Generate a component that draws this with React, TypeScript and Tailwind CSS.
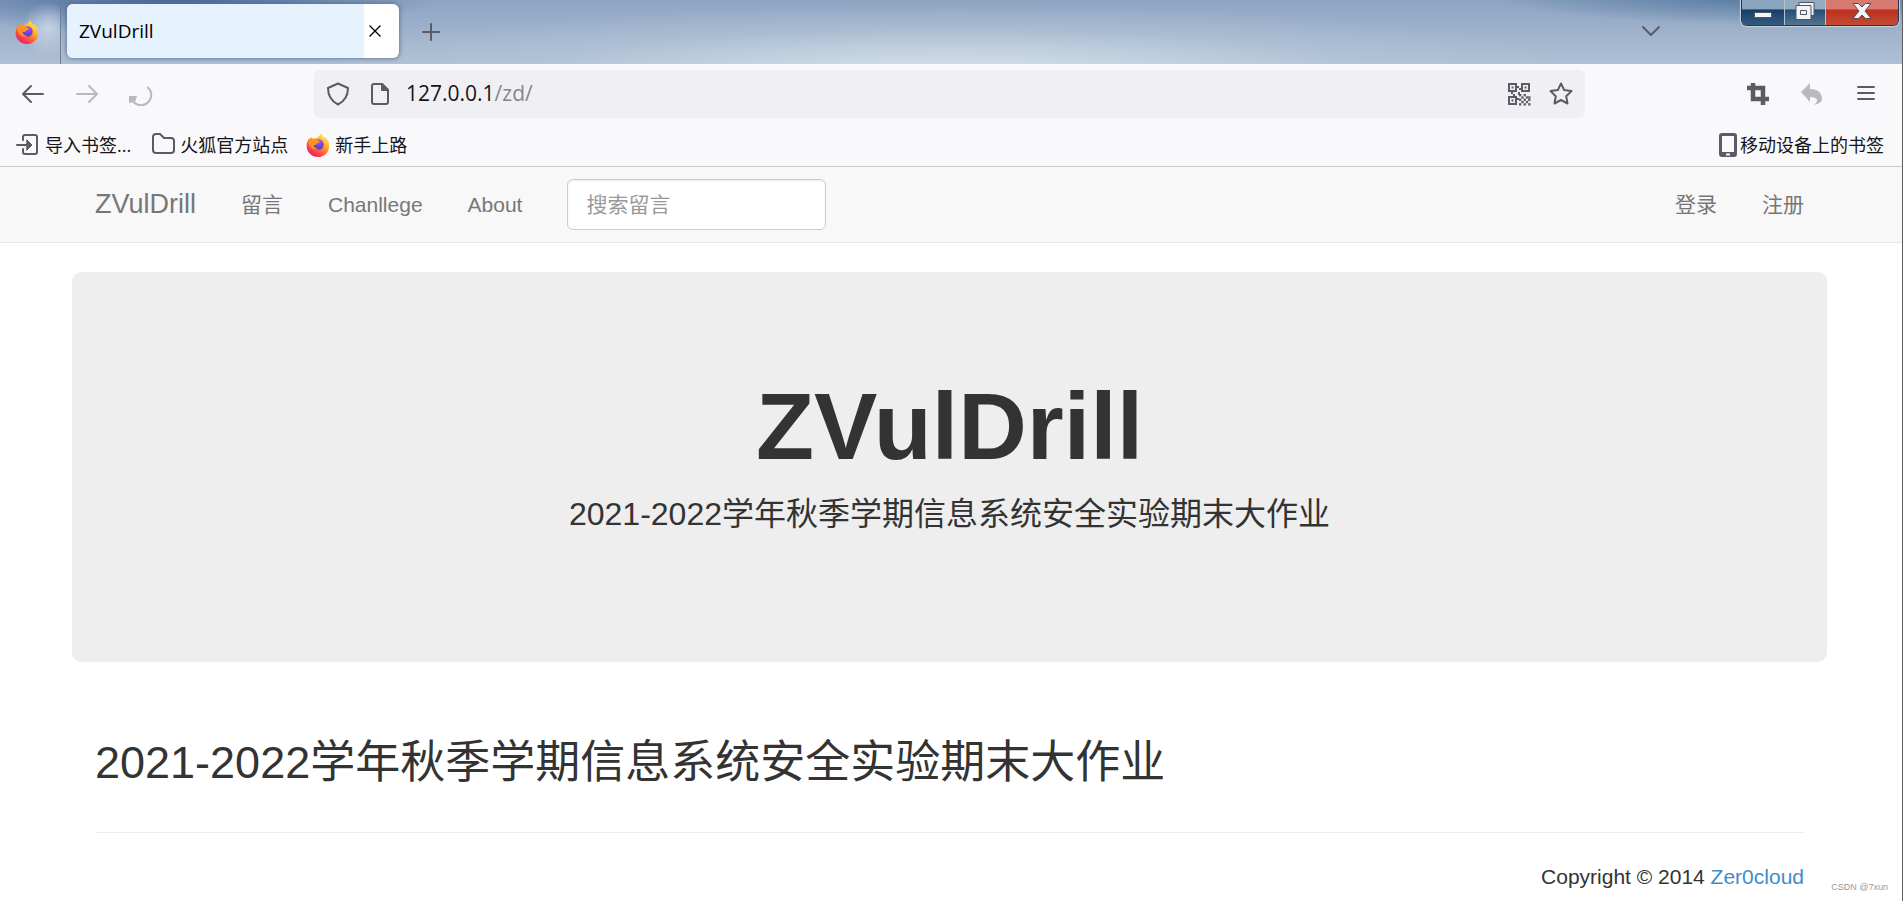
import type { ReactNode } from "react";

const uiFont = "font-['Open_Sans','Noto_Sans_CJK_SC',sans-serif]";
const pageFont = "font-['Liberation_Sans','Noto_Sans_CJK_SC',sans-serif]";

function FirefoxLogo({ id }: { id: string }) {
  return (
    <svg viewBox="0 0 24 24" className="size-6 shrink-0" aria-hidden="true">
      <defs>
        <linearGradient id={`${id}-body`} x1="0.85" y1="0.05" x2="0.25" y2="1">
          <stop offset="0" stopColor="#fff04f" />
          <stop offset="0.35" stopColor="#ffb62e" />
          <stop offset="0.65" stopColor="#ff5f3b" />
          <stop offset="1" stopColor="#ee1468" />
        </linearGradient>
        <radialGradient id={`${id}-core`} cx="0.6" cy="0.15" r="0.85">
          <stop offset="0" stopColor="#b14bf2" />
          <stop offset="1" stopColor="#4b3ecb" />
        </radialGradient>
      </defs>
      <path
        d="M15.300 0c.3 2 1.600 3.500 2.700 4.700.6.1 1-.2.9-.8 3 2.300 4.300 5.600 4.300 9C23.200 19.300 18.200 24 12 24S.6 19.300.6 13c0-3.200 1.200-6 2.600-7.800l.5 1.500 1.700-2.500 1.300 1.900c1-.5 2.300-.6 3.300-.5C11.500 4.500 14 2.500 15.300 0z"
        fill={`url(#${id}-body)`}
      />
      <circle cx="12.500" cy="11.500" r="5.200" fill={`url(#${id}-core)`} />
      <path
        d="M3.200 5.200l.5 1.500 1.700-2.500 1.300 1.900c2-.8 4.300-.2 5.300 1.200.5.8 1.800 1 1.800 1.500 0 .9-1.300 1.100-2.500 1.700-.9.500-.6 1.300-1.700 1.500-.8.200-1.500 0-2.100-.3.2 2.300 2.300 4.300 5 4.200-3.600 1.600-8.700-.8-9.900-5.100-.5-2.200-.2-3.900.6-5.600z"
        fill="#ff9220"
      />
    </svg>
  );
}

function Icon({ children, className = "" }: { children: ReactNode; className?: string }) {
  return (
    <svg
      viewBox="0 0 24 24"
      className={`size-6 shrink-0 ${className}`}
      fill="none"
      stroke="currentColor"
      strokeWidth="2"
      strokeLinecap="round"
      strokeLinejoin="round"
      aria-hidden="true"
    >
      {children}
    </svg>
  );
}

function QrIcon() {
  const finders = [[1, 1], [14, 1], [1, 14]];
  // dark modules of the lower right quarter, row by row
  const rows = ["10100", "01011", "10101", "01010", "10101"];
  return (
    <svg viewBox="0 0 24 24" className="size-6" fill="currentColor" aria-hidden="true">
      {finders.map(([x, y]) => (
        <g key={`${x}-${y}`}>
          <path d={`M${x} ${y}h9v9h-9zm2 2v5h5v-5z`} fillRule="evenodd" />
          <rect x={x + 3.5} y={y + 3.5} width="2" height="2" />
        </g>
      ))}
      <path d="M10 4h2v2h-2zM12 6h2v2h-2zM4 10h2v2H4zM6 12h2v2H6zM11 10h2v3h-2zM10 16h2v2h-2z" />
      {rows.map((row, y) =>
        row.split("").map((cell, x) =>
          cell === "1" ? (
            <rect key={`${x}-${y}`} x={12 + x * 2.3} y={12 + y * 2.3} width="2.300" height="2.300" />
          ) : null
        )
      )}
    </svg>
  );
}

function TitleBar() {
  return (
    <header className="relative flex h-16 overflow-hidden bg-[radial-gradient(ellipse_34%_110%_at_50%_115%,#d8e4ed_0%,#cbd9e5cc_30%,#b8cada66_65%,transparent_100%),radial-gradient(ellipse_16%_50%_at_94%_-10%,#4c739b_0%,transparent_100%),radial-gradient(ellipse_14%_60%_at_9%_-5%,#45669a_0%,transparent_100%),linear-gradient(to_bottom,#8ea4c2_0%,#afc0d5_100%)]">
      <div className="flex w-[61px] items-center border-r border-[#6d7f97] bg-[radial-gradient(circle_at_80%_45%,#c5d2e3_0%,transparent_45%)] pl-[15px]">
        <FirefoxLogo id="title" />
      </div>
      <div className="ml-1.5 mt-1 flex h-[54px] w-[332px] overflow-hidden rounded-md bg-white shadow-[0_0_5px_#4c6487]">
        <button className="flex flex-1 items-center bg-[#e7f2ff] pl-3 text-[19px] text-black">ZVulDrill</button>
        <button aria-label="关闭标签页" className="flex w-[35px] items-center pl-1 text-black">
          <svg viewBox="0 0 14 14" className="size-[14px]" stroke="currentColor" strokeWidth="1.300" aria-hidden="true">
            <path d="M1.500 1.500l11 11M12.500 1.500l-11 11" />
          </svg>
        </button>
      </div>
      <button aria-label="新建标签页" className="ml-5 text-[#5b5b66]">
        <Icon><path d="M12 4v16M4 12h16" /></Icon>
      </button>
      <button aria-label="列出所有标签页" className="ml-auto mr-[78px] text-[#5b5b66]">
        <Icon><path d="M4 7l8 8 8-8" /></Icon>
      </button>
      <div className="mr-[3px] flex h-[26px] shrink-0 overflow-hidden rounded-b-md border border-t-0 border-[#26364b] shadow-[0_0_1px_1px_#c8d5e2]">
        <button aria-label="最小化" className="flex w-[43px] items-center justify-center border-r border-[#b5c3d0] bg-linear-to-b from-[#8ba4bd] from-35% via-[#183e68] via-40% to-[#345b7d]">
          <svg viewBox="0 0 18 7" className="mt-1.5 h-[7px] w-[18px]" aria-hidden="true">
            <rect x="0.500" y="0.500" width="17" height="5" rx="1" fill="#f4f4f4" stroke="#4b5666" />
          </svg>
        </button>
        <button aria-label="还原" className="flex w-[41px] items-center justify-center border-r border-[#b5c3d0] bg-linear-to-b from-[#94abc0] from-35% via-[#254d75] via-40% to-[#54748e]">
          <svg viewBox="0 0 20 18" className="mb-1 h-[18px] w-5" aria-hidden="true">
            <path d="M4 .5h15v13H4z" fill="#f4f4f4" stroke="#4b5666" />
            <path d="M1 3.500h15v14H1zM5.500 8.500v4h6v-4z" fill="#f4f4f4" fillRule="evenodd" stroke="#4b5666" />
          </svg>
        </button>
        <button aria-label="关闭" className="flex w-[72px] items-center justify-center bg-linear-to-b from-[#d87a70] from-35% via-[#bb2f1d] via-40% to-[#c34a33]">
          <svg viewBox="0 0 20 16" className="mb-1 h-4 w-5" aria-hidden="true">
            <path d="M1 .5h5.500L10 4l3.500-3.500H19L13 8l6 7.500h-5.500L10 12l-3.500 3.500H1L7 8z" fill="#f4f4f4" stroke="#5b4b5a" />
          </svg>
        </button>
      </div>
    </header>
  );
}

function Toolbar() {
  return (
    <div className="flex h-[60px] items-center bg-[#f9f9fb] pl-[21px] pr-6 text-[#5b5b66]">
      <div className="flex w-[293px] shrink-0 gap-[30px]">
        <button aria-label="后退">
          <Icon><path d="M22 12H2M10 4l-8 8 8 8" /></Icon>
        </button>
        <button aria-label="前进" className="text-[#b9b9c0]">
          <Icon><path d="M2 12h20M14 4l8 8-8 8" /></Icon>
        </button>
        <button aria-label="刷新" className="text-[#b9b9c0]">
          <Icon>
            <path d="M19 5.500a10 10 0 0 1-14 15" />
            <path d="M0 14h8l-2 6-6 1z" fill="currentColor" stroke="none" />
          </Icon>
        </button>
      </div>
      <div className="flex h-12 flex-1 items-center rounded-md bg-[#f0f0f4] px-3">
        <Icon><path d="M12 1.500l10 4.500c0 7-3 13-10 16.500C5 19 2 13 2 6z" /></Icon>
        <Icon className="ml-[18px]">
          <path d="M6 2h8l6 6v12a2 2 0 0 1-2 2H6a2 2 0 0 1-2-2V4a2 2 0 0 1 2-2z" />
          <path d="M14 2v6h6z" fill="currentColor" />
        </Icon>
        <div className="ml-[14px] text-[21px] text-[#15141a]">
          127.0.0.1<span className="text-[#85858f]">/zd/</span>
        </div>
        <div className="ml-auto flex gap-[18px]">
          <button aria-label="二维码"><QrIcon /></button>
          <button aria-label="添加书签">
            <Icon><path d="M12 1.500l3.200 6.600 7.300 1-5.300 5.100 1.300 7.300-6.500-3.500-6.500 3.500 1.300-7.300-5.300-5.100 7.300-1z" /></Icon>
          </button>
        </div>
      </div>
      <div className="ml-[161px] flex gap-[30px]">
        <button aria-label="截图">
          <svg viewBox="0 0 24 24" className="size-6" fill="none" stroke="currentColor" strokeWidth="4.500" aria-hidden="true">
            <path d="M7 1v16h16M1 6h16v17" />
          </svg>
        </button>
        <button aria-label="撤销" className="text-[#b9b9c0]">
          <svg viewBox="0 0 24 24" className="size-6" fill="currentColor" aria-hidden="true">
            <path d="M10 1v6c8 0 12 4 12 10 0 3-3 5-8 6 5-4 4-8-4-8v5L1 10z" />
          </svg>
        </button>
        <button aria-label="打开应用程序菜单">
          <Icon><path d="M4 5h16M4 11h16M4 17h16" /></Icon>
        </button>
      </div>
    </div>
  );
}

function BookmarksBar() {
  return (
    <nav className="flex h-[43px] items-center border-b border-[#cccccc] bg-[#f9f9fb] pl-4 pr-[18px] text-[18px] text-[#15141a]">
      <a href="#" className="flex items-center gap-[5px]">
        <Icon className="text-[#5b5b66]">
          <path d="M7 7V4a2 2 0 0 1 2-2h10a2 2 0 0 1 2 2v15a2 2 0 0 1-2 2H9a2 2 0 0 1-2-2v-3M1 12h13" />
          <path d="M11 7l5 5-5 5z" fill="currentColor" strokeWidth="1" />
        </Icon>
        导入书签...
      </a>
      <a href="#" className="ml-5 flex items-center gap-[5px]">
        <Icon className="text-[#5b5b66]">
          <path d="M2 4a3 3 0 0 1 3-3h4l4 4h7a3 3 0 0 1 3 3v9a3 3 0 0 1-3 3H5a3 3 0 0 1-3-3z" />
        </Icon>
        火狐官方站点
      </a>
      <a href="#" className="ml-[18px] flex items-center gap-[5px]">
        <FirefoxLogo id="bookmark" />
        新手上路
      </a>
      <a href="#" className="ml-auto flex items-center">
        <svg viewBox="0 0 20 24" className="mr-0.5 h-6 w-5 text-[#5b5b66]" aria-hidden="true">
          <path
            d="M4 0h12a3 3 0 0 1 3 3v18a3 3 0 0 1-3 3H4a3 3 0 0 1-3-3V3a3 3 0 0 1 3-3zm0 3v16h12V3zm4 17.500v2h4v-2z"
            fill="currentColor"
            fillRule="evenodd"
          />
        </svg>
        移动设备上的书签
      </a>
    </nav>
  );
}

function SiteNav() {
  return (
    <nav className="border-b border-[#e7e7e7] bg-[#f8f8f8] pr-[3px]">
      <div className="mx-auto flex h-[75px] max-w-[1755px] items-center gap-[45px] px-[23px] text-[21px] text-[#777777]">
        <a href="#" className="text-[27px]">ZVulDrill</a>
        <a href="#">留言</a>
        <a href="#">Chanllege</a>
        <a href="#">About</a>
        <input
          type="text"
          aria-label="搜索留言"
          placeholder="搜索留言"
          className="h-[51px] w-[259px] rounded-md border border-[#cccccc] bg-white px-[18px] shadow-[inset_0_1px_2px_rgba(0,0,0,0.08)] placeholder:text-[#999999]"
        />
        <a href="#" className="ml-auto">登录</a>
        <a href="#">注册</a>
      </div>
    </nav>
  );
}

export default function App() {
  return (
    <div className={`min-h-screen border-r border-[#5f5f5f] bg-white ${uiFont}`}>
      <TitleBar />
      <Toolbar />
      <BookmarksBar />
      <div className={`text-[#333333] ${pageFont}`}>
        <SiteNav />
        <div className="pr-[3px]">
          <main className="mx-auto max-w-[1755px]">
            <section className="mt-[29px] rounded-[9px] bg-[#eeeeee] pb-[124px] pt-[102px] text-center">
              <h1 className="text-[95px] font-bold leading-[104px]">ZVulDrill</h1>
              <p className="mt-3 text-[32px] leading-[48px]">2021-2022学年秋季学期信息系统安全实验期末大作业</p>
            </section>
            <div className="px-[23px]">
              <h2 className="mt-[76px] text-[45px] leading-[50px]">2021-2022学年秋季学期信息系统安全实验期末大作业</h2>
              <hr className="mt-11 border-[#eeeeee]" />
              <footer className="relative mt-7 text-right text-[21px] leading-[32px]">
                Copyright © 2014 <a href="#" className="text-[#428bca]">Zer0cloud</a>
                <small className="absolute -right-[84px] top-[18px] text-[9px] leading-4 text-[#999999]">CSDN @7xun</small>
              </footer>
            </div>
          </main>
        </div>
      </div>
    </div>
  );
}
